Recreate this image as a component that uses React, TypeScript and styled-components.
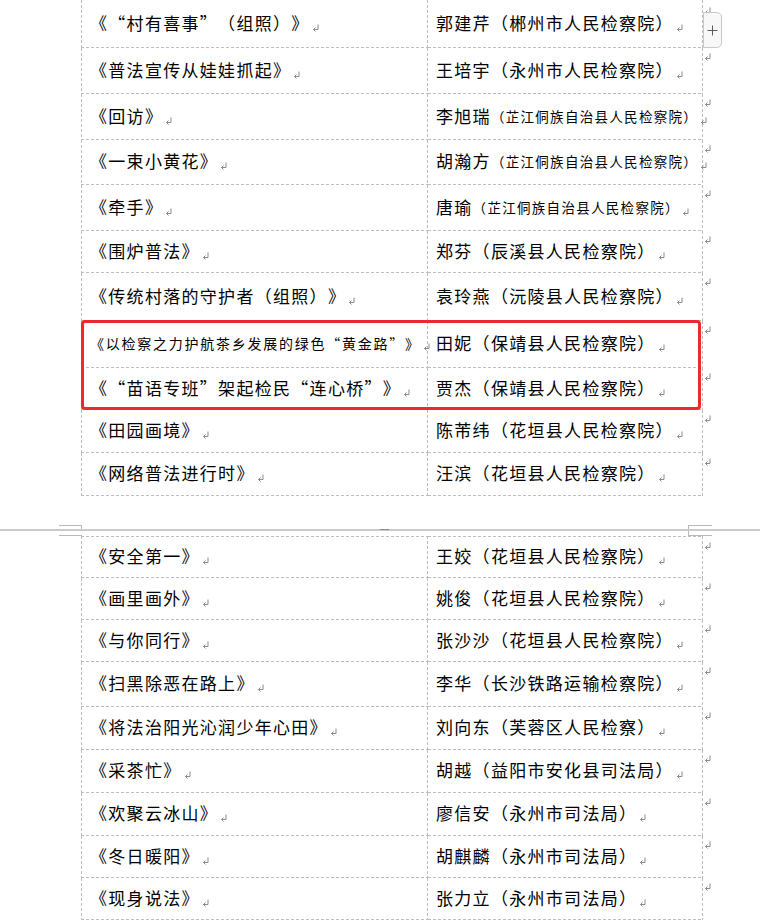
import React from "react";
import styled, { createGlobalStyle } from "styled-components";

const LINE = "#bdbdbd";

const Global = createGlobalStyle`
  html, body { margin: 0; padding: 0; background: #ffffff; }
  body {
    width: 760px;
    height: 920px;
    overflow: hidden;
    font-family: "Noto Sans CJK SC", "Noto Sans", sans-serif;
    color: #000;
    text-spacing-trim: space-all;
  }
`;

const Canvas = styled.div`
  width: 760px;
  height: 920px;
  overflow: hidden;
  background: #fff;
  display: flex;
  flex-direction: column;
`;

const Table = styled.div`
  position: relative;
  margin-left: 81px;
  width: 642px;
  display: flex;
  flex-direction: column;
`;

const Row = styled.div<{ $h: number }>`
  display: grid;
  grid-template-columns: 347px 275px 20px;
  height: ${(p) => p.$h}px;
`;

const dashV = (side: string) =>
  `linear-gradient(to bottom, ${LINE} 3px, transparent 3px) ${side} top / 1px 5px repeat-y`;
const dashH = (side: string) =>
  `linear-gradient(to right, ${LINE} 3px, transparent 3px) left ${side} / 5px 1px repeat-x`;

const Cell = styled.div<{ $first?: boolean; $top?: boolean }>`
  box-sizing: border-box;
  height: 100%;
  display: flex;
  align-items: center;
  padding: ${(p) => (p.$top ? 1 : 0)}px 0 3px ${(p) => (p.$first ? 9 : 8)}px;
  background: ${(p) =>
    [
      dashV("right"),
      dashH("bottom"),
      p.$first ? dashV("left") : null,
      p.$top ? dashH("top") : null,
    ]
      .filter(Boolean)
      .join(", ")};
`;

const Line = styled.span<{ $small?: boolean }>`
  display: block;
  white-space: nowrap;
  font-size: ${(p) => (p.$small ? 14 : 17)}px;
  letter-spacing: ${(p) => (p.$small ? 1.75 : 1.3)}px;
  line-height: 20px;
  font-feature-settings: "fwid" 1;
`;

const Org = styled.span`
  font-size: 13.5px;
  letter-spacing: 1.3px;
  vertical-align: 1px;
`;

const EndCell = styled.div<{ $pt: number }>`
  padding-top: ${(p) => p.$pt}px;
  padding-left: 1px;
  line-height: 0;
`;

const MarkSvg = styled.svg`
  display: inline-block;
  vertical-align: -2px;
  margin-left: 2px;
  overflow: visible;
`;

const PilcrowMark = () => (
  <MarkSvg width="7" height="8" viewBox="0 0 7 8">
    <path d="M6 0.5 V5.5 H1.5" stroke="#8a8a8a" strokeWidth="1" fill="none" />
    <path d="M3.5 3.5 L1.5 5.5 L3.5 7.5" stroke="#8a8a8a" strokeWidth="1" fill="none" />
  </MarkSvg>
);

const RowEnd = styled.svg`
  display: block;
`;

const RowEndMark = () => (
  <RowEnd width="7" height="8" viewBox="0 0 7 8">
    <path d="M6 0.5 V5.5 H1.5" stroke="#8a8a8a" strokeWidth="1" fill="none" />
    <path d="M3.5 3.5 L1.5 5.5 L3.5 7.5" stroke="#8a8a8a" strokeWidth="1" fill="none" />
  </RowEnd>
);

const Highlight = styled.div`
  position: relative;
  display: flex;
  flex-direction: column;
  &::after {
    content: "";
    position: absolute;
    left: 0;
    top: -1px;
    width: 620px;
    height: 90px;
    box-sizing: border-box;
    border: 3px solid #f0282b;
    border-radius: 4px;
    pointer-events: none;
  }
`;

const AddButton = styled.div`
  position: absolute;
  left: 622px;
  top: 12px;
  width: 19px;
  height: 36px;
  box-sizing: border-box;
  border: 1px solid #c8c8c8;
  border-radius: 0 5px 5px 0;
  background: #f8f8f8;
  display: flex;
  align-items: center;
  justify-content: center;
`;

const PageBreak = styled.div`
  display: flex;
  flex-direction: column;
  padding-top: 29px;
`;

const MarkRow = styled.div<{ $h: number }>`
  display: flex;
  height: ${(p) => p.$h}px;
`;

const CropMark = styled.div<{
  $ml: number;
  $w: number;
  $t?: boolean;
  $b?: boolean;
  $l?: boolean;
  $r?: boolean;
}>`
  box-sizing: border-box;
  height: 100%;
  margin-left: ${(p) => p.$ml}px;
  width: ${(p) => p.$w}px;
  border-top: ${(p) => (p.$t ? "1px solid #b8b8b8" : "none")};
  border-bottom: ${(p) => (p.$b ? "1px solid #b8b8b8" : "none")};
  border-left: ${(p) => (p.$l ? "1px solid #b8b8b8" : "none")};
  border-right: ${(p) => (p.$r ? "1px solid #b8b8b8" : "none")};
`;

const GapLine = styled.div`
  height: 2px;
  background: #cbcbcb;
  display: flex;
`;

const Tick = styled.div`
  margin-left: 380px;
  width: 9px;
  height: 1px;
  background: #8a8a8a;
`;

type RowData = {
  title: string;
  name: string;
  org: string;
  h: number;
  smallOrg?: boolean;
  smallTitle?: boolean;
};

const page1: RowData[] = [
  { title: "《“村有喜事”（组照）》", name: "郭建芹", org: "（郴州市人民检察院）", h: 48 },
  { title: "《普法宣传从娃娃抓起》", name: "王培宇", org: "（永州市人民检察院）", h: 46 },
  { title: "《回访》", name: "李旭瑞", org: "（芷江侗族自治县人民检察院）", h: 46, smallOrg: true },
  { title: "《一束小黄花》", name: "胡瀚方", org: "（芷江侗族自治县人民检察院）", h: 45, smallOrg: true },
  { title: "《牵手》", name: "唐瑜", org: "（芷江侗族自治县人民检察院）", h: 46, smallOrg: true },
  { title: "《围炉普法》", name: "郑芬", org: "（辰溪县人民检察院）", h: 42 },
  { title: "《传统村落的守护者（组照）》", name: "袁玲燕", org: "（沅陵县人民检察院）", h: 48 },
];

const highlighted: RowData[] = [
  { title: "《以检察之力护航茶乡发展的绿色“黄金路”》", name: "田妮", org: "（保靖县人民检察院）", h: 47, smallTitle: true },
  { title: "《“苗语专班”架起检民“连心桥”》", name: "贾杰", org: "（保靖县人民检察院）", h: 42 },
];

const page1Tail: RowData[] = [
  { title: "《田园画境》", name: "陈芾纬", org: "（花垣县人民检察院）", h: 43 },
  { title: "《网络普法进行时》", name: "汪滨", org: "（花垣县人民检察院）", h: 43 },
];

const page2: RowData[] = [
  { title: "《安全第一》", name: "王姣", org: "（花垣县人民检察院）", h: 42 },
  { title: "《画里画外》", name: "姚俊", org: "（花垣县人民检察院）", h: 42 },
  { title: "《与你同行》", name: "张沙沙", org: "（花垣县人民检察院）", h: 42 },
  { title: "《扫黑除恶在路上》", name: "李华", org: "（长沙铁路运输检察院）", h: 45 },
  { title: "《将法治阳光沁润少年心田》", name: "刘向东", org: "（芙蓉区人民检察）", h: 43 },
  { title: "《采茶忙》", name: "胡越", org: "（益阳市安化县司法局）", h: 43 },
  { title: "《欢聚云冰山》", name: "廖信安", org: "（永州市司法局）", h: 43 },
  { title: "《冬日暖阳》", name: "胡麒麟", org: "（永州市司法局）", h: 42 },
  { title: "《现身说法》", name: "张力立", org: "（永州市司法局）", h: 42 },
];

const TableRow = ({ d, top, endPt = 5 }: { d: RowData; top?: boolean; endPt?: number }) => (
  <Row $h={d.h}>
    <Cell $first $top={top}>
      <Line $small={d.smallTitle}>
        {d.title}
        <PilcrowMark />
      </Line>
    </Cell>
    <Cell $top={top}>
      <Line>
        {d.name}
        {d.smallOrg ? <Org>{d.org}</Org> : d.org}
        <PilcrowMark />
      </Line>
    </Cell>
    <EndCell $pt={endPt + (top ? 1 : 0)}>
      <RowEndMark />
    </EndCell>
  </Row>
);

export default function App() {
  return (
    <>
      <Global />
      <Canvas>
        <Table>
          {page1.map((d, i) => (
            <TableRow key={d.title} d={d} endPt={i === 0 ? 7 : 5} />
          ))}
          <Highlight>
            {highlighted.map((d) => (
              <TableRow key={d.title} d={d} />
            ))}
          </Highlight>
          {page1Tail.map((d) => (
            <TableRow key={d.title} d={d} />
          ))}
          <AddButton>
            <svg width="11" height="11" viewBox="0 0 11 11">
              <path d="M5.5 0.5 V10.5 M0.5 5.5 H10.5" stroke="#5a5a5a" strokeWidth="1" fill="none" />
            </svg>
          </AddButton>
        </Table>

        <PageBreak>
          <MarkRow $h={4}>
            <CropMark $ml={59} $w={23} $t $r />
            <CropMark $ml={606} $w={24} $t $l />
          </MarkRow>
          <GapLine>
            <Tick />
          </GapLine>
          <MarkRow $h={5}>
            <CropMark $ml={59} $w={23} $b />
            <CropMark $ml={606} $w={24} $b $l />
          </MarkRow>
        </PageBreak>

        <Table>
          {page2.map((d, i) => (
            <TableRow key={d.title} d={i === 0 ? { ...d, h: 42 } : d} top={i === 0} />
          ))}
        </Table>
      </Canvas>
    </>
  );
}
